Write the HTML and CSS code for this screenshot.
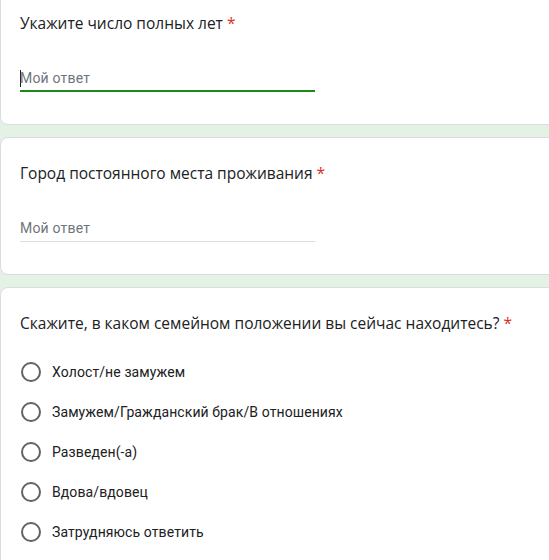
FILE: index.html
```html
<!DOCTYPE html>
<html lang="ru">
<head>
<meta charset="utf-8">
<link rel="stylesheet" href="styles.css">
</head>
<body>
<div class="form">
  <div class="card card-first">
    <div class="title">Укажите число полных лет <span class="req">*</span></div>
    <div class="answer focused"><span class="caret"></span>Мой ответ</div>
  </div>
  <div class="card">
    <div class="title">Город постоянного места проживания <span class="req">*</span></div>
    <div class="answer">Мой ответ</div>
  </div>
  <div class="card">
    <div class="title">Скажите, в каком семейном положении вы сейчас находитесь? <span class="req">*</span></div>
    <div class="options">
      <div class="option"><span class="radio"></span><span class="label">Холост/не замужем</span></div>
      <div class="option"><span class="radio"></span><span class="label">Замужем/Гражданский брак/В отношениях</span></div>
      <div class="option"><span class="radio"></span><span class="label">Разведен(-а)</span></div>
      <div class="option"><span class="radio"></span><span class="label">Вдова/вдовец</span></div>
      <div class="option"><span class="radio"></span><span class="label">Затрудняюсь ответить</span></div>
    </div>
  </div>
</div>
</body>
</html>
```
FILE: styles.css
```css
html, body {
  margin: 0;
  padding: 0;
  background: #e4f2e5;
  overflow: hidden;
  height: 560px;
}
.form {
  display: flex;
  flex-direction: column;
  gap: 12px;
  margin-top: -13px;
  margin-right: -12px;
}
.card {
  background: #fff;
  border: 1px solid #dadce0;
  border-radius: 8px;
  padding: 23px 24px 32px 19px;
}
.title {
  font-family: "Open Sans", Roboto, sans-serif;
  font-size: 15.5px;
  line-height: 24px;
  color: #202124;
  letter-spacing: 0;
}
.req {
  color: #d93025;
}
.answer {
  margin-top: 33px;
  width: 295px;
  font-family: Roboto, sans-serif;
  font-size: 14px;
  line-height: 20px;
  letter-spacing: 0.2px;
  color: #70757a;
  padding-bottom: 3px;
  border-bottom: 1px solid #dadce0;
  display: flex;
  align-items: center;
}
.answer.focused {
  padding-bottom: 2px;
  border-bottom: 2px solid #1a8a1a;
}
.caret {
  width: 1px;
  height: 17px;
  background: #202124;
  margin-right: -1px;
}
.options {
  margin-top: 17px;
  display: flex;
  flex-direction: column;
}
.option {
  height: 40px;
  display: flex;
  align-items: center;
}
.radio {
  width: 16px;
  height: 16px;
  border: 2px solid #5f6368;
  border-radius: 50%;
  margin-left: 1px;
  flex: none;
}
.label {
  margin-left: 11px;
  font-family: Roboto, sans-serif;
  font-size: 14px;
  color: #202124;
  letter-spacing: 0.1px;
}
```
